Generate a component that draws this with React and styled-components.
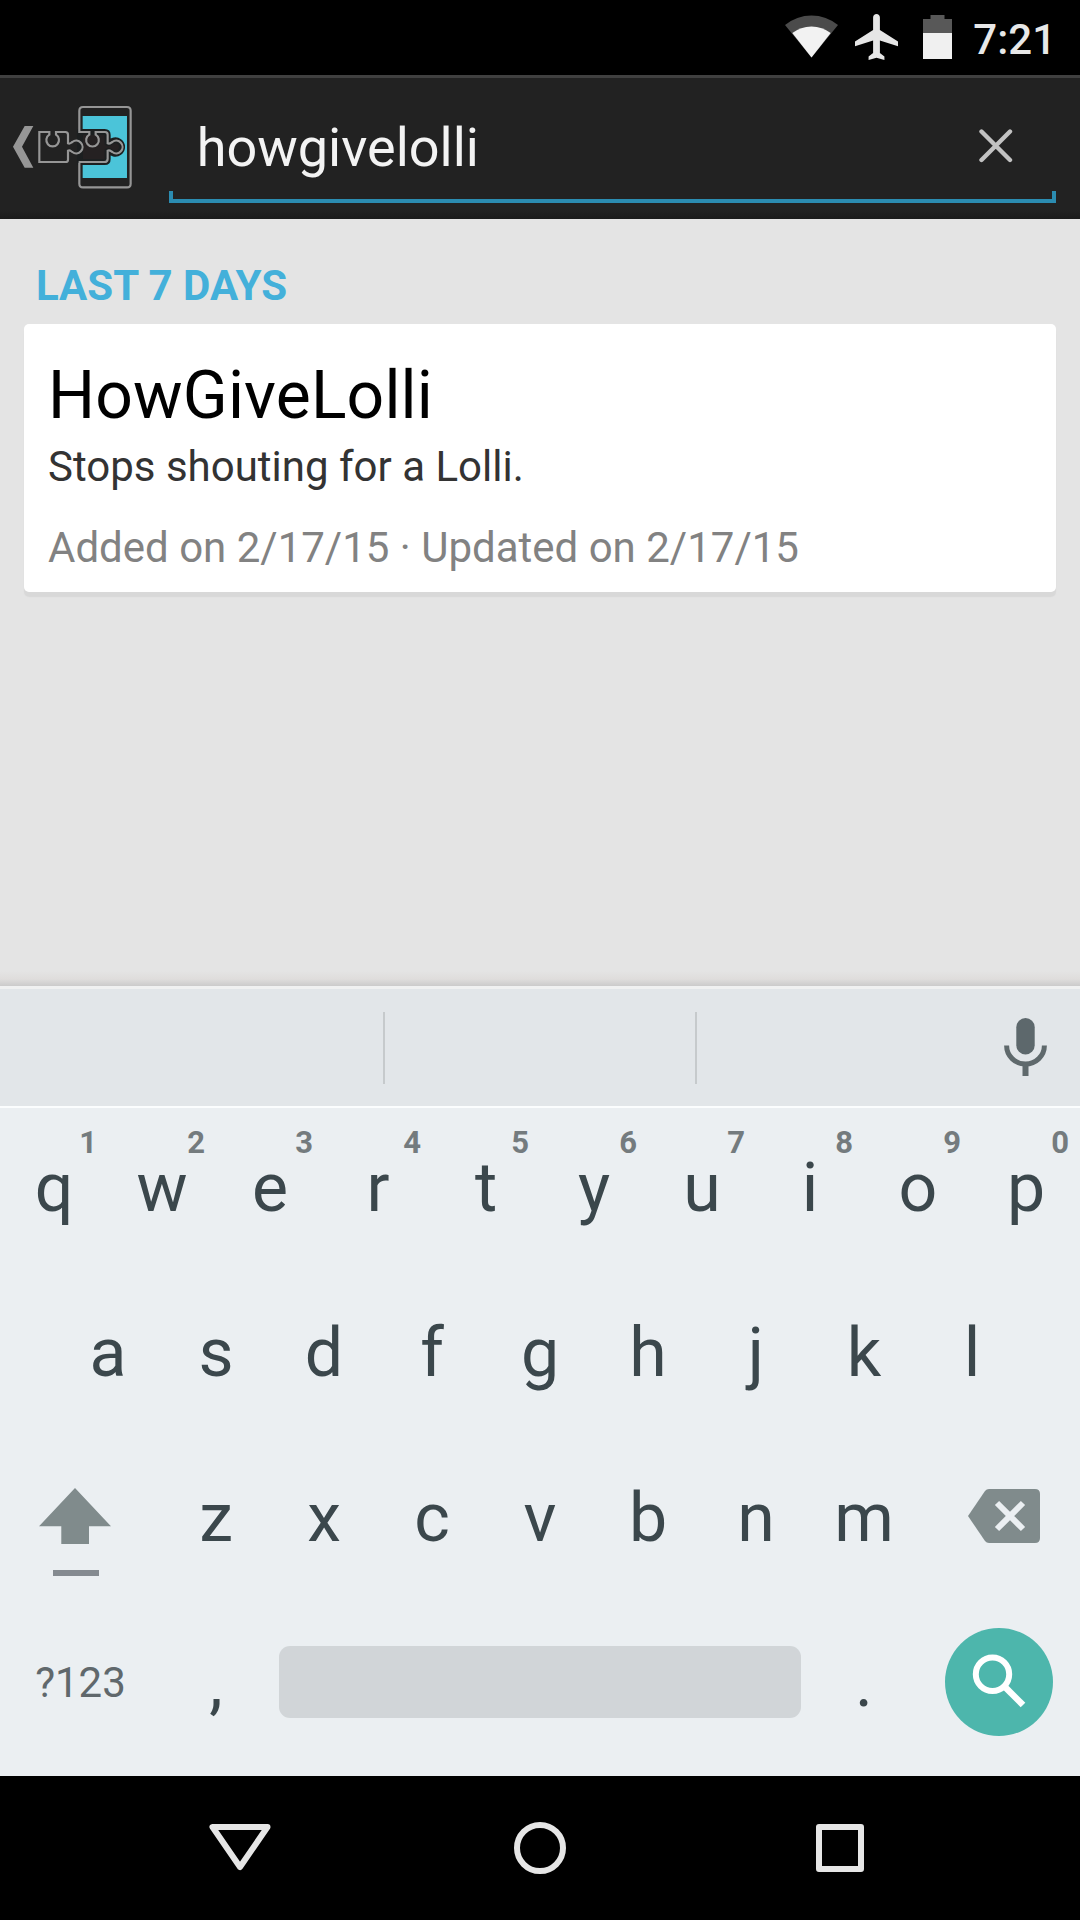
import React from 'react';
import styled, { createGlobalStyle } from 'styled-components';

const GlobalStyle = createGlobalStyle`
  * { box-sizing: border-box; }
  body { margin: 0; background: #000; }
  button { border: 0; padding: 0; background: none; font: inherit; color: inherit; }
  svg { display: block; flex: none; }
`;

const Screen = styled.div`
  display: flex;
  flex-direction: column;
  width: 1080px;
  height: 1920px;
  overflow: hidden;
  background: #e4e4e4;
  font-family: Roboto, 'Noto Sans', sans-serif;
`;

const StatusBar = styled.header`
  display: flex;
  justify-content: flex-end;
  align-items: flex-start;
  height: 75px;
  padding: 14px 24px 0 0;
  background: #000;
  color: #e8e8e8;
`;

const StatusIcon = styled.div`
  margin-right: ${(p) => p.$gap}px;
`;

const Clock = styled.time`
  margin-top: 1px;
  font-size: 42px;
  font-weight: 500;
  line-height: 50px;
`;

const ActionBar = styled.div`
  display: flex;
  align-items: flex-start;
  height: 144px;
  padding: 0 24px 0 12px;
  border-top: 3px solid #404040;
  background: linear-gradient(#222 0 132px, #1b1b1b);
`;

const UpButton = styled.button`
  margin-top: 27px;
`;

const SearchField = styled.div`
  display: flex;
  align-items: center;
  flex: 1;
  height: 125px;
  margin-left: 36px;
  padding: 14px 43px 0 28px;
  background:
    linear-gradient(#2b8cb1, #2b8cb1) left bottom / 4px 12px no-repeat,
    linear-gradient(#2b8cb1, #2b8cb1) right bottom / 4px 12px no-repeat,
    linear-gradient(#2b8cb1, #2b8cb1) left bottom / 100% 4.5px no-repeat;
`;

const Query = styled.span`
  flex: 1;
  color: #f3f3f3;
  font-size: 54px;
  line-height: 64px;
`;

const ClearButton = styled.button`
  margin-bottom: 4px;
`;

const Results = styled.main`
  height: 767px;
  padding: 41px 24px 0;
  background: linear-gradient(#e4e4e4 0 752px, #dfdddc 760px, #cbcbcb);
`;

const SectionTitle = styled.h2`
  margin: 0;
  padding-left: 12px;
  color: #43b0da;
  font-size: 42px;
  font-weight: 700;
  line-height: 51px;
`;

const Card = styled.article`
  height: 268px;
  margin-top: 13px;
  padding: 32px 24px 0;
  border-radius: 5px;
  background: #fff;
  box-shadow: 0 5px 1px #d8d8d8;
`;

const ModuleName = styled.h3`
  margin: 0;
  color: #000;
  font-size: 66px;
  font-weight: 400;
  letter-spacing: 0.15px;
  line-height: 80px;
`;

const Summary = styled.p`
  margin: 6px 0 0;
  color: #333;
  font-size: 42px;
  line-height: 50px;
`;

const Dates = styled.p`
  margin: 31px 0 0;
  color: #828282;
  font-size: 42px;
  line-height: 50px;
`;

const Keyboard = styled.section`
  height: 790px;
  background: #ebeff2;
`;

const SuggestionStrip = styled.div`
  display: flex;
  align-items: center;
  height: 119px;
  padding-right: 33px;
  border-top: 3px solid #f0f1f1;
  background: #e2e6e9;
`;

const Suggestion = styled.div`
  width: ${(p) => p.$width}px;
  height: 72px;
  margin-top: 2px;
  border-right: ${(p) => (p.$last ? 0 : 2)}px solid #c6cacc;
`;

const Keys = styled.div`
  box-shadow: inset 0 1px #e2e6e9, inset 0 3px #fbfdfe;
`;

const KeyRow = styled.div`
  display: flex;
  height: 165px;
  padding: 0 ${(p) => p.$inset || 0}px;
`;

const Key = styled.button`
  position: relative;
  display: flex;
  align-items: center;
  justify-content: center;
  width: ${(p) => (p.$wide ? 162 : 108)}px;
  height: 165px;
  padding-top: 2px;
  color: #3b474c;
  font-size: 68px;
  line-height: 163px;
`;

const Hint = styled.span`
  position: absolute;
  top: 20px;
  right: 11px;
  color: #747b7e;
  font-size: 31px;
  font-weight: 700;
  line-height: 36px;
`;

const SymbolLabel = styled.span`
  margin: 0 1px 2px 0;
  color: #60686c;
  font-size: 42px;
`;

const ShiftFace = styled.span`
  padding: 26px 12px 0 0;
`;

const DeleteFace = styled.span`
  padding: 0 0 6px 10px;
`;

const SpaceBar = styled.button`
  width: 522px;
  height: 72px;
  margin: 46px 9px 0;
  border-radius: 11px;
  background: #d1d5d8;
`;

const SearchDisc = styled.span`
  display: flex;
  align-items: center;
  justify-content: center;
  width: 108px;
  height: 108px;
  margin-bottom: 4px;
  border-radius: 50%;
  background: #4db6ac;
`;

const NavBar = styled.nav`
  display: flex;
  justify-content: center;
  gap: 228px;
  height: 144px;
  align-items: center;
  background: #000;
`;

const WifiIcon = () => (
  <svg width="53" height="44" viewBox="785 14 53 44">
    <path d="M811.5 57.5 785 25a42 42 0 0 1 53 0z" fill="#4b4b4b" />
    <path d="M811.5 57.5 792.3 33a31.2 31.2 0 0 1 38.4 0z" fill="#f2f2f2" />
  </svg>
);

const AirplaneIcon = () => (
  <svg width="43" height="46" viewBox="2 2 19 20" preserveAspectRatio="none">
    <path
      fill="#e6e6e6"
      d="M21 16v-2l-8-5V3.5c0-.83-.67-1.5-1.5-1.5S10 2.67 10 3.5V9l-8 5v2l8-2.5V19l-2 1.5V22l3.5-1 3.5 1v-1.5L13 19v-5.5l8 2.5z"
    />
  </svg>
);

const BatteryIcon = () => (
  <svg width="29" height="45" viewBox="0 0 29 45">
    <path d="M0 5h7.500V1h14V5H29V19H0z" fill="#585858" />
    <path d="M0 19H29V45H0z" fill="#f0f0f0" />
  </svg>
);

const PuzzleLogo = () => (
  <svg width="120.67" height="84" viewBox="36 105 362 252" fill="none">
    <path d="M39 230 74 168H100L66 230 100 293H74z" fill="#969696" />
    <path d="M248 138H381V324H248z" fill="#4bc4d9" />
    <path
      d="M240 186H314Q323 186 323 195V219C328 222 332 214 340 212A20 20 0 1 1 340 250C332 248 328 240 323 243V267Q323 276 314 276H240z"
      fill="#252122"
      stroke="#1c1f20"
      strokeWidth="18"
    />
    <path
      d="M118 186V276H197Q204 276 204 269V242C210 239 212 243 217 246A19 19 0 1 0 217 216C212 219 210 223 204 220V194Q204 186 196 186H168V194A19 19 0 1 1 148 194V186z"
      stroke="#969696"
      strokeWidth="6.500"
    />
    <path
      d="M238 278V341Q238 352 249 352H381Q392 352 392 341V122Q392 111 381 111H249Q238 111 238 122V186H268V194A19 19 0 1 0 287 194V186H315Q323 186 323 194V220C329 223 332 219 337 216A19 19 0 1 1 337 246C332 243 329 239 323 242V266Q323 276 313 276H236"
      stroke="#969696"
      strokeWidth="6.500"
    />
  </svg>
);

const ClearIcon = () => (
  <svg width="34" height="34" viewBox="0 0 34 34">
    <path d="M2.500 2.500 31 31M31 2.500 2.500 31" stroke="#c2c2c2" strokeWidth="4.400" strokeLinecap="round" />
  </svg>
);

const MicIcon = () => (
  <svg width="43" height="58" viewBox="0 0 43 58">
    <rect x="12.300" width="18.400" height="36.500" rx="9.200" fill="#5d686c" />
    <path d="M2.600 27.500a18.900 18.600 0 0 0 37.800 0" fill="none" stroke="#5f696c" strokeWidth="5" />
    <path d="M18.500 46h6v12h-6z" fill="#5f696c" />
  </svg>
);

const ShiftIcon = () => (
  <svg width="72" height="88" viewBox="39 1488 72 88">
    <path d="M75 1488 111 1526.300H89V1544H61.300V1526.300H39z" fill="#808b8c" />
    <path d="M53 1570H99V1576H53z" fill="#848a90" />
  </svg>
);

const DeleteIcon = () => (
  <svg width="72" height="54" viewBox="0 0 72 54">
    <path d="M21 0H67Q72 0 72 5V49Q72 54 67 54H21Q18.500 54 17 52L0 27 17 2Q18.500 0 21 0z" fill="#808b8c" />
    <path d="M29 14 55 40M55 14 29 40" stroke="#ebeff2" strokeWidth="6" />
  </svg>
);

const SearchIcon = () => (
  <svg width="108" height="108" viewBox="945 1628 108 108">
    <circle cx="992.500" cy="1674.300" r="16.700" fill="none" stroke="#fff" strokeWidth="6" />
    <path d="M1005 1687 1023 1705" stroke="#fff" strokeWidth="6.500" />
  </svg>
);

const NavIcon = ({ children }) => (
  <svg width="72" height="72" viewBox="-36 -36 72 72" fill="none" stroke="#e6e6e6" strokeWidth="6" strokeLinejoin="round">
    {children}
  </svg>
);

const numberedKeys = [...'qwertyuiop'].map((letter, i) => ({ letter, hint: (i + 1) % 10 }));

export default function App() {
  return (
    <Screen>
      <GlobalStyle />
      <StatusBar>
        <StatusIcon $gap={17}><WifiIcon /></StatusIcon>
        <StatusIcon $gap={25}><AirplaneIcon /></StatusIcon>
        <StatusIcon $gap={21}><BatteryIcon /></StatusIcon>
        <Clock>7:21</Clock>
      </StatusBar>

      <ActionBar>
        <UpButton aria-label="Navigate up"><PuzzleLogo /></UpButton>
        <SearchField>
          <Query>howgivelolli</Query>
          <ClearButton aria-label="Clear query"><ClearIcon /></ClearButton>
        </SearchField>
      </ActionBar>

      <Results>
        <SectionTitle>LAST 7 DAYS</SectionTitle>
        <Card>
          <ModuleName>HowGiveLolli</ModuleName>
          <Summary>Stops shouting for a Lolli.</Summary>
          <Dates>Added on 2/17/15 · Updated on 2/17/15</Dates>
        </Card>
      </Results>

      <Keyboard>
        <SuggestionStrip>
          <Suggestion $width={385} />
          <Suggestion $width={312} />
          <Suggestion $width={307} $last />
          <MicIcon />
        </SuggestionStrip>
        <Keys>
          <KeyRow>
            {numberedKeys.map(({ letter, hint }) => (
              <Key key={letter}>{letter}<Hint>{hint}</Hint></Key>
            ))}
          </KeyRow>
          <KeyRow $inset={54}>
            {[...'asdfghjkl'].map((letter) => <Key key={letter}>{letter}</Key>)}
          </KeyRow>
          <KeyRow>
            <Key $wide aria-label="Shift"><ShiftFace><ShiftIcon /></ShiftFace></Key>
            {[...'zxcvbnm'].map((letter) => <Key key={letter}>{letter}</Key>)}
            <Key $wide aria-label="Delete"><DeleteFace><DeleteIcon /></DeleteFace></Key>
          </KeyRow>
          <KeyRow>
            <Key $wide><SymbolLabel>?123</SymbolLabel></Key>
            <Key>,</Key>
            <SpaceBar aria-label="Space" />
            <Key>.</Key>
            <Key $wide aria-label="Search"><SearchDisc><SearchIcon /></SearchDisc></Key>
          </KeyRow>
        </Keys>
      </Keyboard>

      <NavBar>
        <NavIcon><path d="M-27.500-21H27.500L0 19z" /></NavIcon>
        <NavIcon><circle r="23" /></NavIcon>
        <NavIcon><path d="M-21-21H21V21H-21z" /></NavIcon>
      </NavBar>
    </Screen>
  );
}
